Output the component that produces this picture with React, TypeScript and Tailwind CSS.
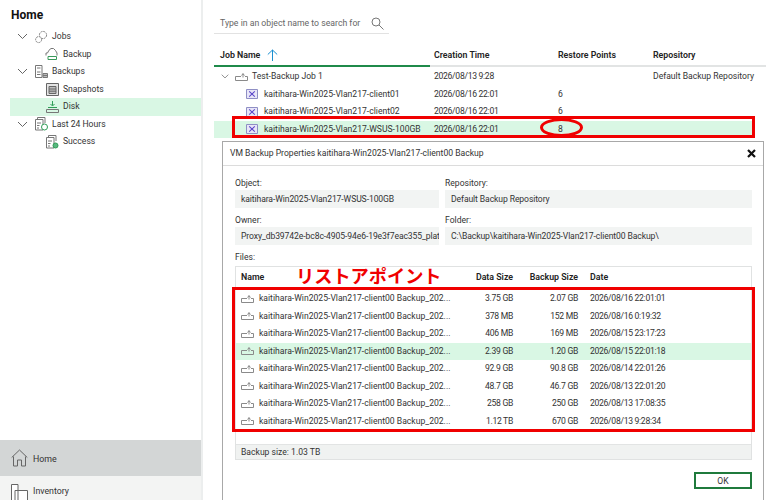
const FONT = "font-['Roboto','Noto_Sans_CJK_JP',sans-serif]";

function Chevron({ className = "" }: { className?: string }) {
  return (
    <svg width="11" height="7" viewBox="0 0 11 7" fill="none" stroke="#666" className={className}>
      <path d="M1 1l4.5 4.5L10 1" />
    </svg>
  );
}

function IconGears() {
  return (
    <svg width="14" height="14" viewBox="0 0 14 14" fill="none" stroke="#777" strokeWidth="0.9">
      <circle cx="9" cy="5" r="3.6" strokeDasharray="2 0.8" />
      <circle cx="4.6" cy="9.6" r="3" fill="#fff" strokeDasharray="2 0.8" />
    </svg>
  );
}

function IconBackupJob() {
  return (
    <svg width="14" height="14" viewBox="0 0 14 14" fill="none">
      <path d="M1 8.5V6h1.5L4 3.2 6 1.5h2.5L10.5 3.5 12 6v2.5" stroke="#777" />
      <path d="M3 9.5h8.5v3H3z" fill="#fff" stroke="#3a9a5b" />
    </svg>
  );
}

function IconBackups() {
  return (
    <svg width="13" height="13" viewBox="0 0 13 13" fill="none" stroke="#777">
      <path d="M.5.5h6.5v12H.5zM2 3h3.5M2 7h3.5M2 9.5h3.5" />
      <path d="M8 8.5h4.5v4H8zM8 10.5h4.5" fill="#bbb" />
    </svg>
  );
}

function IconSnapshots() {
  return (
    <svg width="13" height="13" viewBox="0 0 13 13" fill="none" stroke="#666">
      <path d="M.5.5h12v12H.5z" fill="#e4e4e4" />
      <path d="M3 3.5h7v7H3z" fill="#bdbdbd" />
      <path d="M3 6h7M3 8.2h7" />
    </svg>
  );
}

function IconDisk() {
  return (
    <svg width="13" height="13" viewBox="0 0 13 13" fill="none">
      <path d="M6.5 1v4.5M4.5 4l2 2 2-2" stroke="#2f9e57" />
      <path d="M2 7.5h9" stroke="#2f9e57" />
      <path d="M.5 9.5h12v3H.5z" stroke="#777" />
    </svg>
  );
}

function IconReport({ big = false }: { big?: boolean }) {
  return (
    <svg width="13" height="14" viewBox="0 0 13 14" fill="none">
      <path d="M.5 2.5h7.5v10.5H.5zM2.5 2.5V.5h7.5V6" stroke="#777" />
      <path d="M2 6h4M2 8.5h2.5M2 11h2" stroke="#777" />
      <circle cx="9.5" cy={big ? 10 : 10.5} r={big ? 3 : 2.5} fill={big ? "#fff" : "#59b77f"} stroke="#2f9e57" />
    </svg>
  );
}

function IconVm() {
  return (
    <svg width="12" height="10" viewBox="0 0 12 10" fill="none" className="shrink-0">
      <path d="M.5.5h11v9H.5z" fill="#e8e6f8" stroke="#8f8fc4" />
      <path d="M3.2 2.4l5.6 5.2M8.8 2.4L3.2 7.6" stroke="#5a46c8" strokeWidth="1.1" />
    </svg>
  );
}

function IconPoint() {
  return (
    <svg width="13" height="8" viewBox="0 0 13 8" fill="none" stroke="#8a8a8a" className="shrink-0">
      <path d="M.5 3.5h5.5M.5 3.5v4h12v-4h-2.5M8 .5v4M6.5 2.5L8 .7 9.5 2.5" />
    </svg>
  );
}

const nav = [
  { label: "Jobs", icon: <IconGears />, depth: 0 },
  { label: "Backup", icon: <IconBackupJob />, depth: 1 },
  { label: "Backups", icon: <IconBackups />, depth: 0 },
  { label: "Snapshots", icon: <IconSnapshots />, depth: 1 },
  { label: "Disk", icon: <IconDisk />, depth: 1, active: true },
  { label: "Last 24 Hours", icon: <IconReport big />, depth: 0 },
  { label: "Success", icon: <IconReport />, depth: 1 },
];

const jobs = [
  { name: "kaitihara-Win2025-Vlan217-client01", time: "2026/08/16 22:01", points: "6" },
  { name: "kaitihara-Win2025-Vlan217-client02", time: "2026/08/16 22:01", points: "6" },
  { name: "kaitihara-Win2025-Vlan217-WSUS-100GB", time: "2026/08/16 22:01", points: "8", active: true },
];

const files = [
  ["3.75 GB", "2.07 GB", "2026/08/16 22:01:01"],
  ["378 MB", "152 MB", "2026/08/16 0:19:32"],
  ["406 MB", "169 MB", "2026/08/15 23:17:23"],
  ["2.39 GB", "1.20 GB", "2026/08/15 22:01:18"],
  ["92.9 GB", "90.8 GB", "2026/08/14 22:01:26"],
  ["48.7 GB", "46.7 GB", "2026/08/13 22:01:20"],
  ["258 GB", "250 GB", "2026/08/13 17:08:35"],
  ["1.12 TB", "670 GB", "2026/08/13 9:28:34"],
];

function Sidebar() {
  return (
    <div className="w-[203px] shrink-0 h-full flex flex-col border-r-2 border-[#eceeee] bg-white">
      <div className="pl-[11px] pt-[6px] h-[28px] text-[12px] leading-[18px] font-bold text-[#111]">Home</div>
      <div className="flex-1 pl-[10px]">
        {nav.map((n) => (
          <div
            key={n.label}
            className={`h-[17.5px] flex items-center ${n.active ? "bg-[#d9f7e4]" : ""} ${n.depth ? "pl-[35px]" : "pl-[7px]"}`}
          >
            {!n.depth && <Chevron className="mr-[6px] w-[11px]" />}
            <span className="w-[14px] flex justify-center shrink-0">{n.icon}</span>
            <span className="ml-[4px] text-[8.6px] text-[#333]">{n.label}</span>
          </div>
        ))}
      </div>
      <div className="h-[36px] bg-[#d3d6d6] flex items-center pl-[11px] gap-[5px]">
        <svg width="17" height="18" viewBox="0 0 17 18" fill="none" stroke="#666">
          <path d="M.7 8.5L8.5 1l7.8 7.5M2.5 7.5v9.5h4v-6h4v6h4V7.5" />
        </svg>
        <span className="text-[8.8px] leading-[16px] pt-[1px] text-[#333]">Home</span>
      </div>
      <div className="h-[24px] bg-[#f3f4f3] flex items-start pl-[11px] pt-[8px] gap-[5px]">
        <svg width="17" height="18" viewBox="0 0 17 18" fill="none" stroke="#666" className="shrink-0">
          <path d="M.5.5h6.5v16H.5zM4 6.5h12.5v10H4z" fill="#fff" />
        </svg>
        <span className="text-[8.8px] leading-[13px] pt-[1px] text-[#333]">Inventory</span>
      </div>
    </div>
  );
}

function JobTable() {
  return (
    <div className="flex-1 pl-[11px] pt-[14px]">
      <div className="w-[175px] h-[20px] border-b border-[#e2e2e2] flex items-center pl-[6px] gap-[11px]">
        <span className="text-[8.7px] text-[#666] whitespace-nowrap">Type in an object name to search for</span>
        <svg width="13" height="13" viewBox="0 0 13 13" fill="none" stroke="#777" className="shrink-0">
          <circle cx="5" cy="5" r="4" />
          <path d="M8 8l4.5 4.5" />
        </svg>
      </div>
      <div className="mt-[12px] flex h-[21px] text-[8.8px] leading-[13px] font-semibold text-[#222]">
        <div className="w-[216px] border-b-2 border-[#1f8a4a] pl-[6px] pt-[3px] flex items-start gap-[7px]">
          <span>Job Name</span>
          <svg width="11" height="12" viewBox="0 0 11 12" fill="none" stroke="#1a8fd0">
            <path d="M.8 5.5L5.5 1l4.7 4.5M5.5 1v11" />
          </svg>
        </div>
        <div className="flex-1 border-b-2 border-[#e2e4e4] flex pt-[3px]">
          <span className="w-[128px] pl-[4px]">Creation Time</span>
          <span className="w-[95px]">Restore Points</span>
          <span>Repository</span>
        </div>
      </div>
      <div className="text-[8.6px] text-[#333] mt-[1px]">
        <div className="h-[17.5px] flex items-center">
          <Chevron className="ml-[7px] w-[8px]" />
          <span className="ml-[6px]"><IconPoint /></span>
          <span className="ml-[4px] w-[182px] whitespace-nowrap">Test-Backup Job 1</span>
          <span className="w-[124px] tracking-[-0.3px]">2026/08/13 9:28</span>
          <span className="w-[95px]" />
          <span>Default Backup Repository</span>
        </div>
        {jobs.map((j) => (
          <div key={j.name} className={`h-[17.5px] w-[538px] flex items-center pl-[32px] ${j.active ? "bg-[#d9f7e4]" : ""}`}>
            <IconVm />
            <span className="ml-[6px] w-[170px] whitespace-nowrap shrink-0">{j.name}</span>
            <span className="w-[124px] tracking-[-0.3px]">{j.time}</span>
            <span>{j.points}</span>
          </div>
        ))}
      </div>
    </div>
  );
}

function Field({ label, value, className = "" }: { label: string; value: string; className?: string }) {
  return (
    <div className={className}>
      <div className="h-[14px] text-[8.6px] leading-[14px] text-[#333]">{label}</div>
      <div className="h-[18px] bg-[#f2f4f3] pl-[6px] pr-[1px] text-[8.6px] leading-[19px] tracking-[-0.1px] text-[#333] overflow-hidden whitespace-nowrap">
        {value}
      </div>
    </div>
  );
}

function PropertiesDialog() {
  return (
    <div className="absolute left-[222px] top-[141px] w-[542px] h-[362px] bg-white border border-[#a8a8a8] flex flex-col">
      <div className="h-[24px] shrink-0 border-b border-[#dcdcdc] flex items-center justify-between pl-[7px] pr-[7px]">
        <span className="text-[8.6px] text-[#333]">VM Backup Properties kaitihara-Win2025-Vlan217-client00 Backup</span>
        <svg width="9" height="9" viewBox="0 0 9 9" stroke="#111" strokeWidth="2.2">
          <path d="M1 1l7 7M8 1L1 8" />
        </svg>
      </div>
      <div className="pl-[12px] pr-[11px] pt-[10px] flex-1">
        <div className="flex gap-[6px]">
          <Field label="Object:" value="kaitihara-Win2025-Vlan217-WSUS-100GB" className="w-[204px]" />
          <Field label="Repository:" value="Default Backup Repository" className="flex-1" />
        </div>
        <div className="flex gap-[6px] mt-[5px]">
          <Field label="Owner:" value="Proxy_db39742e-bc8c-4905-94e6-19e3f7eac355_plat" className="w-[204px]" />
          <Field label="Folder:" value="C:\Backup\kaitihara-Win2025-Vlan217-client00 Backup\" className="flex-1" />
        </div>
        <div className="mt-[5px] h-[16px] text-[8.6px] leading-[15px] text-[#333]">Files:</div>
        <div className="h-[194px] border border-[#e0e2e2] flex flex-col text-[8.6px] text-[#333]">
          <div className="h-[21px] shrink-0 flex items-center text-[8.8px] font-semibold text-[#222]">
            <span className="w-[215px] pl-[5px]">Name</span>
            <span className="w-[62px] text-right">Data Size</span>
            <span className="w-[65px] text-right">Backup Size</span>
            <span className="pl-[12px]">Date</span>
          </div>
          <div className="flex-1 pt-[2px]">
            {files.map((f, i) => (
              <div key={f[2]} className={`h-[17.5px] flex items-center ${i === 3 ? "bg-[#d9f7e4]" : ""}`}>
                <span className="w-[215px] pl-[5px] flex items-center shrink-0">
                  <IconPoint />
                  <span className="ml-[5px] whitespace-nowrap">kaitihara-Win2025-Vlan217-client00 Backup_202...</span>
                </span>
                <span className="w-[62px] text-right tracking-[-0.3px]">{f[0]}</span>
                <span className="w-[65px] text-right tracking-[-0.3px]">{f[1]}</span>
                <span className="pl-[12px] tracking-[-0.3px]">{f[2]}</span>
              </div>
            ))}
          </div>
          <div className="h-[15px] shrink-0 bg-[#f0f2f1] border-t border-[#e2e4e4] pl-[5px] leading-[14px]">Backup size: 1.03 TB</div>
        </div>
        <div className="flex justify-end mt-[12px]">
          <button className="w-[58px] h-[17px] border-2 border-[#1f7a3c] text-[8.6px] leading-[12px] text-[#333]">OK</button>
        </div>
      </div>
    </div>
  );
}

export default function App() {
  return (
    <div className={`relative w-[766px] h-[500px] overflow-hidden bg-white flex ${FONT}`}>
      <Sidebar />
      <JobTable />
      <PropertiesDialog />
      {/* red annotations drawn on top of the screenshot */}
      <div className="absolute left-[232px] top-[116px] w-[523px] h-[22px] border-[3px] border-[#f00000]" />
      <div className="absolute left-[540px] top-[118px] w-[43px] h-[19px] border-[3px] border-[#f00000] rounded-[50%]" />
      <div className="absolute left-[232px] top-[287px] w-[523px] h-[145px] border-[3px] border-[#f00000]" />
      <div className="absolute left-[296px] top-[265px] text-[18.2px] leading-[24px] font-bold text-[#f00000]">リストアポイント</div>
    </div>
  );
}
